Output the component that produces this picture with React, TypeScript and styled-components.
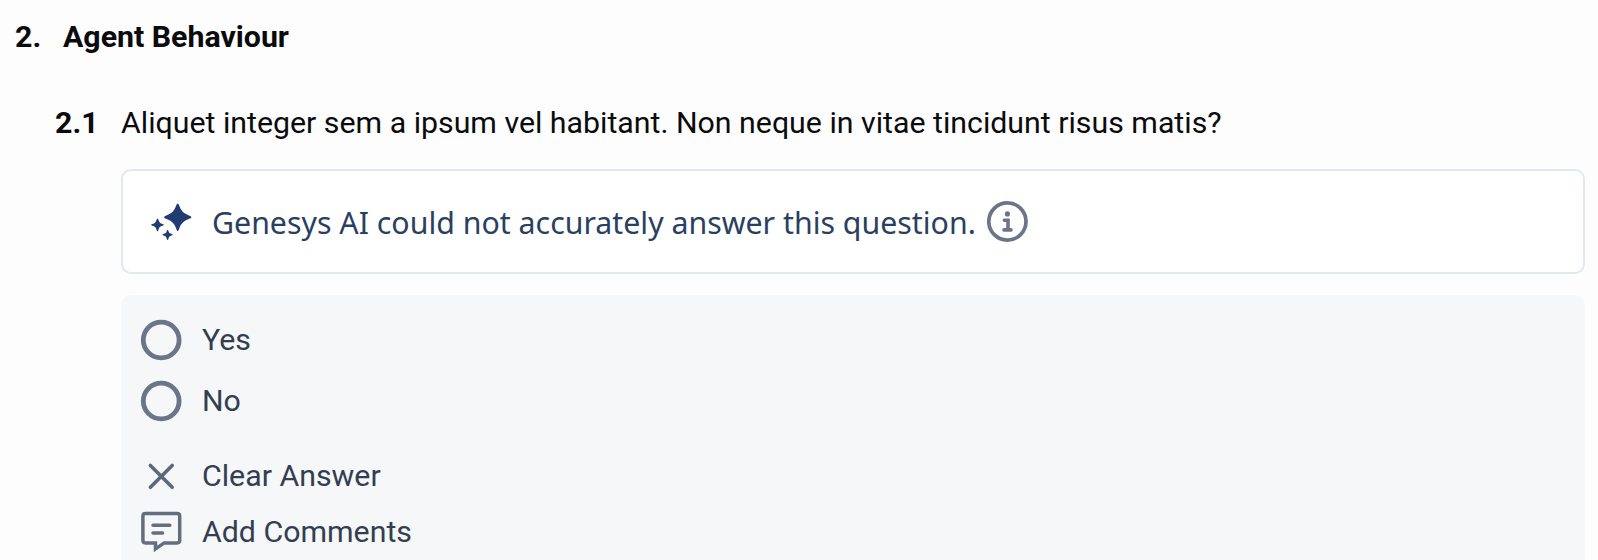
import React from "react";
import styled, { createGlobalStyle } from "styled-components";

const Global = createGlobalStyle`
  * { box-sizing: border-box; }
  body { margin: 0; background: #fdfdfd; overflow: hidden; }
`;

const Page = styled.main`
  height: 560px;
  padding: 17px 13px 0 15px;
  overflow: hidden;
  font-family: Roboto, "Liberation Sans", sans-serif;
  font-size: 30.3px;
  line-height: 40px;
  color: #0b0b0d;
  white-space: nowrap;
`;

const SectionTitle = styled.h2`
  display: flex;
  margin: 0;
  font-size: inherit;
  font-weight: 700;
`;

const SectionNumber = styled.span`
  width: 48px;
`;

const Question = styled.div`
  display: flex;
  margin: 46px 0 0 40px;
`;

const QuestionNumber = styled.span`
  width: 66px;
  font-weight: 700;
`;

const Body = styled.div`
  margin: 26px 0 0 106px;
`;

const Notice = styled.div`
  display: flex;
  align-items: center;
  height: 105px;
  padding-left: 28px;
  border: 2px solid #e2e8f0;
  border-radius: 10px;
  background: #fff;
  color: #2a4061;
  font-family: "Noto Sans", sans-serif;
`;

const NoticeText = styled.span`
  margin: 3px 11px 0 20px;
`;

const Answers = styled.div`
  display: flex;
  flex-direction: column;
  height: 300px;
  margin-top: 21px;
  padding: 25px 0 0 20px;
  border-radius: 10px;
  background: #f5f7f9;
  color: #343e50;
`;

const Row = styled.div<{ $gap?: number }>`
  display: flex;
  align-items: center;
  height: 40px;
  margin-top: ${(p) => p.$gap ?? 0}px;
`;

const Label = styled.span`
  margin-left: 20px;
`;

const Icon = styled.svg`
  display: block;
  flex: none;
`;

const Radio = () => (
  <Icon width="41" height="40" viewBox="0 0 41 40" overflow="visible">
    <circle cx="20.200" cy="20" r="17.900" fill="none" stroke="#6b7587" strokeWidth="4.800" />
  </Icon>
);

const Sparkles = () => (
  <Icon width="41" height="40" viewBox="0 0 41 40" fill="#203c72">
    <path d="M26.700 1.500Q27.700 1.500 28.400 4Q30.500 10.700 37 13Q40.500 14.200 40.500 15.200Q40.500 16.200 37 17.300Q30.500 19.700 28.400 26Q27.600 29.300 26.700 29.300Q25.800 29.300 25 26Q22.800 19.700 16.400 17.300Q12.900 16.200 12.900 15.200Q12.900 14.200 16.400 13Q22.800 10.700 25 4Q25.700 1.500 26.700 1.500Z" />
    <path d="M6.500 16.500Q7.200 16.500 8 19.300Q8.600 20.800 10 21.400Q13 22.100 13 22.800Q13 23.500 10 24.200Q8.600 24.800 8 26.300Q7.200 29.300 6.500 29.300Q5.800 29.300 5 26.300Q4.400 24.800 3 24.200Q0 23.500 0 22.800Q0 22.100 3 21.400Q4.400 20.800 5 19.300Q5.800 16.500 6.500 16.500Z" />
    <path d="M16.600 27.700Q17.200 27.700 17.900 30.200Q18.400 31.200 19.400 31.600Q21.800 32.200 21.800 32.800Q21.800 33.400 19.400 34Q18.400 34.400 17.900 35.400Q17.200 37.900 16.600 37.900Q16 37.900 15.300 35.400Q14.800 34.400 13.800 34Q11.400 33.400 11.400 32.800Q11.400 32.200 13.800 31.600Q14.800 31.200 15.300 30.200Q16 27.700 16.600 27.700Z" />
  </Icon>
);

const Info = () => (
  <Icon width="41" height="41" viewBox="0 0 41 41">
    <circle cx="20.400" cy="20.500" r="18.600" fill="none" stroke="#6b7587" strokeWidth="3.700" />
    <circle cx="20.400" cy="12.900" r="2.600" fill="#6b7587" />
    <path d="M17.400 19.300H21V28.600M17 28.900H24" fill="none" stroke="#6b7587" strokeWidth="3.600" strokeLinecap="round" />
  </Icon>
);

const Cross = () => (
  <Icon width="41" height="40" viewBox="0 0 41 40" fill="none" stroke="#5e687a" strokeWidth="3.600" strokeLinecap="round">
    <path d="M9.400 9.500L31.200 31.300M31.200 9.500L9.400 31.300" />
  </Icon>
);

const Comment = () => (
  <Icon width="41" height="40" viewBox="0 0 41 40" overflow="visible" fill="none" stroke="#646e80" strokeWidth="3.500">
    <path d="M4.500 1.500H36.100Q38.700 1.500 38.700 4.100V28.300Q38.700 30.900 36.100 30.900H23.200L14.500 37V30.900H4.500Q1.900 30.900 1.900 28.300V4.100Q1.900 1.500 4.500 1.500Z" />
    <path d="M12 13.200H28.800M12 20.900H21.500" strokeLinecap="round" />
  </Icon>
);

export default function App() {
  return (
    <>
      <Global />
      <Page>
        <SectionTitle>
          <SectionNumber>2.</SectionNumber>
          <span>Agent Behaviour</span>
        </SectionTitle>
        <Question>
          <QuestionNumber>2.1</QuestionNumber>
          <span>
            Aliquet integer sem a ipsum vel habitant. Non neque in vitae tincidunt risus matis?
          </span>
        </Question>
        <Body>
          <Notice>
            <Sparkles />
            <NoticeText>Genesys AI could not accurately answer this question.</NoticeText>
            <Info />
          </Notice>
          <Answers>
            <Row><Radio /><Label>Yes</Label></Row>
            <Row $gap={20.5}><Radio /><Label>No</Label></Row>
            <Row $gap={35.5}><Cross /><Label>Clear Answer</Label></Row>
            <Row $gap={16}><Comment /><Label>Add Comments</Label></Row>
          </Answers>
        </Body>
      </Page>
    </>
  );
}
